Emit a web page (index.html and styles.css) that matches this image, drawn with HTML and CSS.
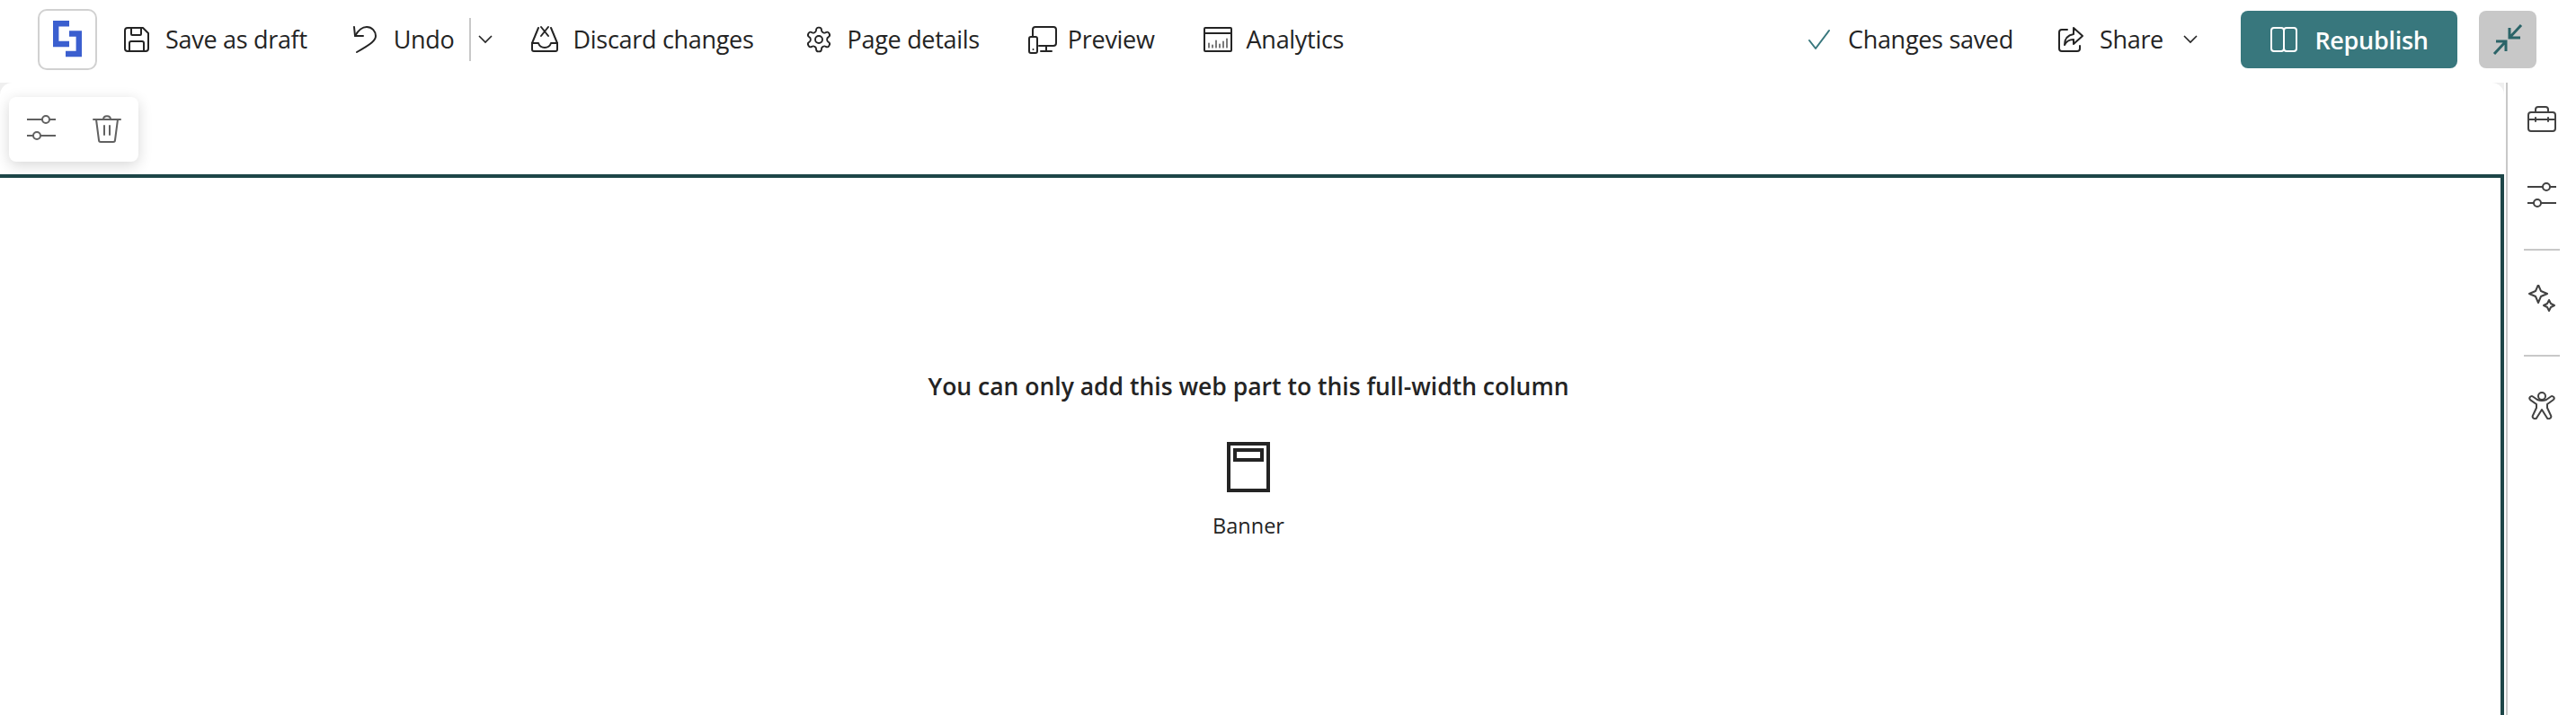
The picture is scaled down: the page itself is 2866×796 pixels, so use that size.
FILE: index.html
```html
<!DOCTYPE html>
<html lang="en">
<head>
    <meta charset="UTF-8">
    <meta name="viewport" content="width=device-width, initial-scale=1.0">
    <title>Edit page</title>
    <link rel="stylesheet" href="styles.css">
</head>
<body>
    <header class="topbar">
        <div class="logo">
            <svg width="32" height="42" viewBox="0 0 32 42"><path class="logo-mark" d="M18 3.2H3.2V26H18M14 37H28.8V14.5H18"/></svg>
        </div>

        <div class="tool tool-save">
            <svg class="icon" viewBox="0 0 32 32"><path d="M6 3h17l6 6v17a3 3 0 0 1-3 3H6a3 3 0 0 1-3-3V6a3 3 0 0 1 3-3z"/><path d="M10 3v7a1 1 0 0 0 1 1h9a1 1 0 0 0 1-1V3"/><path d="M8 29v-9a2 2 0 0 1 2-2h12a2 2 0 0 1 2 2v9"/></svg>
            <span>Save as draft</span>
        </div>
        <div class="tool tool-undo">
            <svg class="icon" viewBox="0 0 32 32"><path d="M4 2l1 10 9 0"/><path d="M5 12C9 5 14 2 18 2c6 0 10 5 10 10 0 5-5 9-21 18"/></svg>
            <span>Undo</span>
        </div>
        <div class="split">
            <svg class="chevron" viewBox="0 0 16 10"><path d="M1 1l7 7 7-7"/></svg>
        </div>
        <div class="tool tool-discard">
            <svg class="icon" viewBox="0 0 32 32"><path d="M2 20v7a2 2 0 0 0 2 2h24a2 2 0 0 0 2-2v-7"/><path d="M2 20h7c1 3 3 5 7 5s6-2 7-5h7"/><path d="M2 20L9 3M30 20L23 3"/><path d="M12 2l8 10M20 2l-8 10"/></svg>
            <span>Discard changes</span>
        </div>
        <div class="tool tool-details">
            <svg class="icon" viewBox="0 0 24 24"><path class="thin" d="M12.22 2h-.44a2 2 0 0 0-2 2v.18a2 2 0 0 1-1 1.73l-.43.25a2 2 0 0 1-2 0l-.15-.08a2 2 0 0 0-2.73.73l-.22.38a2 2 0 0 0 .73 2.73l.15.1a2 2 0 0 1 1 1.72v.51a2 2 0 0 1-1 1.74l-.15.09a2 2 0 0 0-.73 2.73l.22.38a2 2 0 0 0 2.73.73l.15-.08a2 2 0 0 1 2 0l.43.25a2 2 0 0 1 1 1.73V20a2 2 0 0 0 2 2h.44a2 2 0 0 0 2-2v-.18a2 2 0 0 1 1-1.73l.43-.25a2 2 0 0 1 2 0l.15.08a2 2 0 0 0 2.73-.73l.22-.39a2 2 0 0 0-.73-2.73l-.15-.08a2 2 0 0 1-1-1.74v-.5a2 2 0 0 1 1-1.74l.15-.09a2 2 0 0 0 .73-2.73l-.22-.38a2 2 0 0 0-2.73-.73l-.15.08a2 2 0 0 1-2 0l-.43-.25a2 2 0 0 1-1-1.73V4a2 2 0 0 0-2-2z"/><circle class="thin" cx="12" cy="12" r="3"/></svg>
            <span>Page details</span>
        </div>
        <div class="tool tool-preview">
            <svg class="icon" viewBox="0 0 32 32"><path d="M5 12V5a3 3 0 0 1 3-3h20a3 3 0 0 1 3 3v15a3 3 0 0 1-3 3H12"/><path d="M20 23v6M14 29h12"/><rect x="1" y="13" width="9" height="18" rx="2"/><circle class="dot" cx="5.5" cy="27" r="1"/></svg>
            <span>Preview</span>
        </div>
        <div class="tool tool-analytics">
            <svg class="icon" viewBox="0 0 32 32"><rect x="1" y="3" width="30" height="26" rx="1"/><path d="M1 9h30"/><path class="fine" d="M6 25v-5M10 25v-3M14 25v-8M18 25v-4M22 25v-7M26 25v-10"/></svg>
            <span>Analytics</span>
        </div>

        <div class="tool tool-saved">
            <svg class="icon check" viewBox="0 0 32 32"><path d="M5 17l7 9L27 6"/></svg>
            <span>Changes saved</span>
        </div>
        <div class="tool tool-share">
            <svg class="icon" viewBox="0 0 32 32"><path d="M12 5H6a3 3 0 0 0-3 3v18a3 3 0 0 0 3 3h17a3 3 0 0 0 3-3v-3"/><path d="M19 3l10 9-10 9v-5c-5 0-8 2-10 6 0-8 4-11 10-12z"/></svg>
            <span>Share</span>
            <svg class="chevron share-chevron" viewBox="0 0 16 10"><path d="M1 1l7 7 7-7"/></svg>
        </div>
        <button class="republish">
            <svg width="32" height="32" viewBox="0 0 32 32"><rect x="2" y="3" width="14" height="26" rx="3"/><rect x="16" y="3" width="14" height="26" rx="3"/></svg>
            Republish
        </button>
        <button class="collapse">
            <svg width="34" height="34" viewBox="0 0 34 34"><path d="M32 1L19 15M19 4v11h12M2 33l13-14M15 30V19H4"/></svg>
        </button>
    </header>

    <div class="workspace">
        <div class="web-part-bar">
            <svg class="icon grey" viewBox="0 0 32 32"><path d="M0 5h17M25 5h7M0 23h7M15 23h17"/><circle cx="21" cy="5" r="4"/><circle cx="11" cy="23" r="4"/></svg>
            <svg class="icon grey" viewBox="0 0 32 32"><path d="M1 5h30M12 5c0-5 8-5 8 0M4 5l3 23a2 2 0 0 0 2 2h14a2 2 0 0 0 2-2l3-23M13 12v10M19 12v10"/></svg>
        </div>

        <div class="canvas">
            <div class="page">
                <section class="section-frame">
                    <h2>You can only add this web part to this full-width column</h2>
                    <svg class="banner-icon" width="48" height="56" viewBox="0 0 48 56"><rect x="2" y="2" width="44" height="52"/><rect x="9" y="9" width="30" height="11"/></svg>
                    <div class="banner-label">Banner</div>
                </section>
            </div>
        </div>

        <aside class="rail">
            <div class="rail-item rail-tools">
                <svg class="icon" viewBox="0 0 32 32"><rect x="1" y="7" width="30" height="21" rx="3"/><path d="M9 7V4a3 3 0 0 1 3-3h8a3 3 0 0 1 3 3v3M1 15h30M9 13v4M23 13v4"/></svg>
            </div>
            <div class="rail-item">
                <svg class="icon" viewBox="0 0 32 32"><path d="M0 5h17M25 5h7M0 23h7M15 23h17"/><circle cx="21" cy="5" r="4"/><circle cx="11" cy="23" r="4"/></svg>
            </div>
            <hr class="rail-sep">
            <div class="rail-item rail-spark">
                <svg class="icon" viewBox="0 0 32 32"><path d="M12 0l3 7 7 3-7 3-3 7-3-7-7-3 7-3z"/><path d="M24 17l2 4 4 2-4 2-2 4-2-4-4-2 4-2z"/></svg>
            </div>
            <hr class="rail-sep">
            <div class="rail-item">
                <svg class="icon" viewBox="0 0 32 32"><path d="M11 10L6 6.5a2.3 2.3 0 0 0-2.6 3.8L10 15v4L6 27.5a2.5 2.5 0 0 0 4.5 2.2L16 21l5.5 8.7a2.5 2.5 0 0 0 4.5-2.2L22 19v-4l6.6-4.7a2.3 2.3 0 0 0-2.6-3.8L21 10q-5 2-10 0z"/><circle cx="16" cy="6" r="4"/></svg>
            </div>
        </aside>
    </div>
</body>
</html>
```

FILE: styles.css
```css
/* Base styles */
:root {
    --text: #242424;
    --teal: #38777d;
    --teal-dark: #1d4648;
    --line: #c8c8c8;
}

* {
    box-sizing: border-box;
}

body {
    font-family: "Open Sans", "Noto Sans", sans-serif;
    color: var(--text);
    margin: 0;
    height: 796px;
    overflow: hidden;
    background: white;
}

svg {
    display: block;
    flex: none;
    fill: none;
}

.icon {
    width: 32px;
    height: 32px;
    stroke: var(--text);
    stroke-width: 2;
    stroke-linecap: round;
    stroke-linejoin: round;
}

.icon .thin {
    stroke-width: 1.4;
}

.icon .fine {
    stroke-width: 1.2;
}

.icon .dot {
    fill: var(--text);
    stroke: none;
}

.icon.grey {
    stroke: #616161;
}

.icon.check {
    stroke: var(--teal);
}

/* Top bar */
.topbar {
    display: flex;
    align-items: center;
    height: 92px;
    padding: 0 44px 4px 42px;
}

.logo {
    width: 66px;
    height: 68px;
    border: 2px solid #d1d1d1;
    border-radius: 10px;
    display: flex;
    align-items: center;
    justify-content: center;
}

.logo-mark {
    fill: none;
    stroke: #3b5fcf;
    stroke-width: 6.4;
}

.tool {
    display: flex;
    align-items: center;
    gap: 16px;
    font-size: 27px;
    letter-spacing: -0.3px;
    white-space: nowrap;
}

.tool span {
    padding-bottom: 2px;
}

.tool-save { margin-left: 28px; }
.tool-undo { margin-left: 48px; }
.tool-discard { margin-left: 42px; }
.tool-details { margin-left: 56px; }
.tool-preview { margin-left: 54px; gap: 12px; }
.tool-analytics { margin-left: 54px; }
.tool-saved { margin-left: auto; }
.tool-share { margin-left: 48px; }

.split {
    height: 48px;
    margin-left: 16px;
    padding-left: 8px;
    border-left: 2px solid var(--line);
    display: flex;
    align-items: center;
}

.chevron {
    width: 16px;
    height: 10px;
    stroke: var(--text);
    stroke-width: 1.6;
}

.share-chevron {
    margin-left: 6px;
}

.republish {
    width: 241px;
    height: 64px;
    margin-left: 48px;
    background: var(--teal);
    color: white;
    border: none;
    border-radius: 8px;
    display: flex;
    align-items: center;
    justify-content: center;
    gap: 18px;
    font-family: inherit;
    font-size: 27px;
    font-weight: 600;
    letter-spacing: -0.3px;
}

.republish svg {
    stroke: white;
    stroke-width: 2;
}

.collapse {
    width: 64px;
    height: 64px;
    margin-left: 24px;
    background: var(--line);
    border: none;
    border-radius: 8px;
    padding: 0;
    display: flex;
    align-items: center;
    justify-content: center;
}

.collapse svg {
    stroke: #2b6468;
    stroke-width: 3;
}

/* Canvas */
.workspace {
    position: relative;
    display: flex;
    height: 704px;
}

.web-part-bar {
    position: absolute;
    top: 16px;
    left: 10px;
    width: 144px;
    height: 72px;
    padding: 20px;
    display: flex;
    gap: 41px;
    background: white;
    border-radius: 8px;
    box-shadow: 0 4px 16px rgba(0, 0, 0, 0.16);
    z-index: 1;
}

.canvas {
    flex: 1;
    margin-right: 2px;
    background: #efefef;
}

.page {
    height: 100%;
    padding-top: 102px;
    background: white;
    border-radius: 14px 14px 0 0;
}

.section-frame {
    height: 100%;
    padding-right: 4px;
    border-top: 4px solid var(--teal-dark);
    border-right: 4px solid var(--teal-dark);
    display: flex;
    flex-direction: column;
    align-items: center;
}

.section-frame h2 {
    margin: 212px 0 0;
    font-size: 26.5px;
    line-height: 40px;
    font-weight: 600;
}

.banner-icon {
    margin-top: 42px;
    stroke: var(--text);
    stroke-width: 4;
}

.banner-label {
    margin-top: 20px;
    font-size: 23.5px;
    line-height: 34px;
}

/* Right rail */
.rail {
    width: 78px;
    border-left: 2px solid var(--line);
    display: flex;
    flex-direction: column;
    align-items: center;
    padding-top: 26px;
}

.rail .icon {
    stroke: #424242;
}

.rail-item {
    height: 32px;
}

.rail-tools {
    margin-bottom: 53px;
}

.rail-spark {
    height: 36px;
}

.rail-sep {
    width: 40px;
    height: 2px;
    margin: 42px 0 38px;
    border: none;
    background: var(--line);
}
```
